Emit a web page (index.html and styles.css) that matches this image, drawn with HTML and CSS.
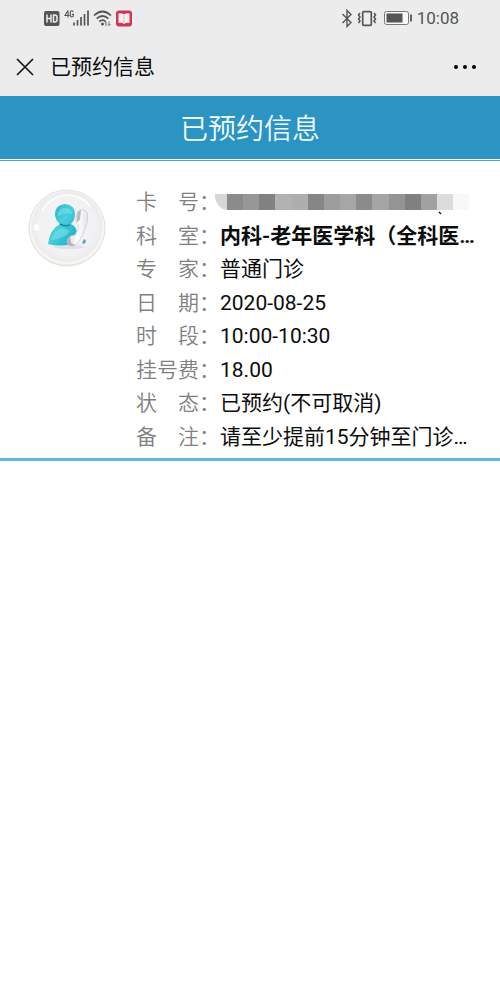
FILE: index.html
```html
<!DOCTYPE html>
<html lang="zh-CN">
<head>
<meta charset="utf-8">
<meta name="viewport" content="width=device-width, initial-scale=1">
<title>已预约信息</title>
<link rel="stylesheet" href="styles.css">
</head>
<body>
<div class="status">
  <svg class="status-icons" width="92" height="22" viewBox="43 7 92 22" aria-hidden="true">
    <rect x="44" y="11" width="15.500" height="15" rx="2" fill="#555"/>
    <path d="M47 14.500v8M51 14.500v8M47 18.500h4M53.500 15v7h1.200q2.300 0 2.300-2.300v-2.400q0-2.300-2.300-2.300z" fill="none" stroke="#eee" stroke-width="1.500"/>
    <path d="M68 10.500v7M68 10.500l-3 5h4.500M73.300 12q-.4-1.300-1.500-1.300-1.500 0-1.500 1.800v2.800q0 1.700 1.500 1.700 1.500 0 1.500-1.600v-1h-1.500" fill="none" stroke="#555" stroke-width="1.100"/>
    <path d="M74 22.500v3M77.500 20v5.500M81 17v8.500M84.500 14v11.500M88 10.500v15" stroke="#555" stroke-width="1.700"/>
    <path d="M94 15.500q8.500-8 17 0M96.700 18.700q5.800-5.400 11.600 0M99.300 21.700q3.200-3 6.400 0" fill="none" stroke="#555" stroke-width="1.700"/>
    <circle cx="102.500" cy="24" r="1.500" fill="#555"/>
    <path d="M106 22v4M105 23.500l1-1.500M109 21.500v4l1.500-1.500M109 25.500l-1-1" fill="none" stroke="#777"/>
    <rect x="116" y="10.500" width="16" height="16" rx="3" fill="#cf3656"/>
    <path d="M118.500 13.500q3-1 5.500 1 2.500-2 5.500-1v9.500q-3-.7-5.500 1-2.500-1.700-5.500-1z" fill="#fff0ef"/>
    <path d="M124 14.500v9.500" stroke="#e7a2ad" stroke-width=".8"/>
  </svg>
  <div class="status-right">
    <svg width="74" height="20" viewBox="340 8 74 20" aria-hidden="true">
      <path d="M342.500 14l8.500 8.500-4 4V10.500l4 4-8.500 8.500" fill="none" stroke="#555" stroke-width="1.400"/>
      <rect x="362.700" y="11.700" width="8.600" height="13.600" rx="1" fill="none" stroke="#555" stroke-width="1.700"/>
      <path d="M360 13l-1.500 2 1.500 2-1.500 2 1.500 2-1.500 2M374 13l1.500 2-1.500 2 1.500 2-1.500 2 1.500 2" fill="none" stroke="#555" stroke-width="1.500"/>
      <rect x="384.500" y="11.500" width="24" height="13" rx="2" fill="#f7f7f7" stroke="#777"/>
      <rect x="386.500" y="13.500" width="16" height="9" fill="#555"/>
      <path d="M411 14.500v7" stroke="#555" stroke-width="1.800"/>
    </svg>
    <time>10:08</time>
  </div>
</div>
<header class="nav">
  <button class="icon-button" type="button" aria-label="关闭">
    <svg width="18" height="18" viewBox="0 0 18 18"><path d="M1 1l16 16M17 1L1 17" stroke="#161616" stroke-width="1.700"/></svg>
  </button>
  <div class="nav-title">已预约信息</div>
  <button class="icon-button" type="button" aria-label="更多">
    <svg width="22" height="6" viewBox="0 0 22 6"><circle cx="2" cy="3" r="2"/><circle cx="11" cy="3" r="2"/><circle cx="20" cy="3" r="2"/></svg>
  </button>
</header>
<main>
  <h1 class="title">已预约信息</h1>
  <section class="record">
    <svg class="avatar" width="80" height="80" viewBox="0 0 80 80" aria-hidden="true">
      <defs>
        <radialGradient id="disc" cx=".5" cy=".48" r=".52">
          <stop offset=".7" stop-color="#f2f2f4"/><stop offset=".87" stop-color="#ececec"/><stop offset=".94" stop-color="#f8f8f5"/><stop offset="1" stop-color="#dcdcd2"/>
        </radialGradient>
        <linearGradient id="body" x1="0" y1="0" x2="1" y2="1">
          <stop offset="0" stop-color="#25a9be"/><stop offset=".45" stop-color="#48d0df"/><stop offset="1" stop-color="#1ba6be"/>
        </linearGradient>
        <linearGradient id="phone" x1="0" y1="0" x2="1" y2="0">
          <stop offset="0" stop-color="#d8d4da"/><stop offset=".5" stop-color="#fff"/><stop offset="1" stop-color="#e6e3e8"/>
        </linearGradient>
      </defs>
      <circle cx="40" cy="40" r="38" fill="url(#disc)" stroke="#e3e3d9"/>
      <path d="M15 23Q24 8 40 7q14 0 23 11" fill="none" stroke="#fff" stroke-width="2" opacity=".8"/>
      <circle cx="9.500" cy="39.500" r="3" fill="#fff"/>
      <ellipse cx="42" cy="59" rx="15" ry="2" fill="#dce3e6"/>
      <path d="M21 56q2-15 12-20-5-4-5-10 0-9 10-10 10 1 10 10 0 6-4 10 5 2 6 8l-6 12q-12 3-23 0z" fill="url(#body)"/>
      <path d="M31 25q3-6 9-5 5 2 5 6-8-2-14 2zM24 52q4-11 12-12l7 3q-5 8-19 9z" fill="#80e2e9" opacity=".55"/>
      <path d="M33 36q5 3 10 1" fill="none" stroke="#158fa4" stroke-width="1.500"/>
      <path d="M51 23q6-3 9 1 2 7-2 17-2 7-6 12-3 4-6 5-5 0-6-4 0-4 4-6l4-1q4-6 4-10-3-1-3-5 0-5 2-9z" fill="url(#phone)" stroke="#cfcbd1" stroke-width=".8"/>
      <path d="M51 24l3-2-1 9q-1 3-3 3-1-5 1-10zM40 54q0-3 3-5l1 6 4 2q-6 3-8-3z" fill="#a79fa9" opacity=".75"/>
      <path d="M55 55l2-4q4 2 0 5z" fill="#53adbd"/>
    </svg>
    <dl class="details">
      <div class="row"><dt>卡　号：</dt><dd class="masked">
        <svg width="256" height="24" viewBox="214 191 256 24" role="img" aria-label="已隐藏">
          <path d="M215 194h12v16q-9-1-12-12z" fill="#d6d6d6"/>
          <g shape-rendering="crispEdges">
          <path fill="#8b8b8b" d="M227 194h16v16h-16z"/><path fill="#979797" d="M243 194h16v16h-16z"/>
          <path fill="#828282" d="M259 194h16v16h-16z"/><path fill="#b2b2b2" d="M275 194h17v16h-17z"/>
          <path fill="#aeaeae" d="M292 194h16v16h-16z"/><path fill="#868686" d="M308 194h16v16h-16z"/>
          <path fill="#9d9d9d" d="M324 194h16v16h-16z"/><path fill="#a6a6a6" d="M340 194h16v16h-16z"/>
          <path fill="#8b8b8b" d="M356 194h16v16h-16z"/><path fill="#a5a5a5" d="M372 194h17v16h-17z"/>
          <path fill="#949494" d="M389 194h16v16h-16z"/><path fill="#808080" d="M405 194h16v16h-16z"/>
          <path fill="#a1a1a1" d="M421 194h16v16h-16z"/><path fill="#dcdcdc" d="M437 194h16v16h-16z"/>
          <path fill="#f8f8f8" d="M453 194h16v16h-16z"/>
          </g>
          <path d="M439 212l2 2" stroke="#111" stroke-width="1.500"/>
        </svg>
      </dd></div>
      <div class="row"><dt>科　室：</dt><dd class="strong">内科-老年医学科（全科医…</dd></div>
      <div class="row"><dt>专　家：</dt><dd>普通门诊</dd></div>
      <div class="row"><dt>日　期：</dt><dd>2020-08-25</dd></div>
      <div class="row"><dt>时　段：</dt><dd>10:00-10:30</dd></div>
      <div class="row"><dt>挂号费：</dt><dd>18.00</dd></div>
      <div class="row"><dt>状　态：</dt><dd>已预约(不可取消)</dd></div>
      <div class="row"><dt>备　注：</dt><dd>请至少提前15分钟至门诊…</dd></div>
    </dl>
  </section>
</main>
</body>
</html>
```
FILE: styles.css
```css
* {
  box-sizing: border-box;
}

body {
  margin: 0;
  background: #fff;
  color: #0c0c0c;
  font-family: Roboto, "Noto Sans CJK SC", sans-serif;
  font-size: 21px;
}

.status {
  display: flex;
  align-items: center;
  justify-content: space-between;
  height: 36px;
  padding: 0 41px 0 43px;
  background: #ececec;
}

.status-right {
  display: flex;
  align-items: center;
  gap: 3px;
  color: #555;
  font-size: 17px;
}

.nav {
  display: flex;
  align-items: center;
  height: 60px;
  padding: 2px 24px 0 16px;
  background: #ececec;
}

.nav-title {
  flex: 1;
  padding-left: 16px;
  line-height: 30px;
}

.icon-button {
  display: flex;
  padding: 0;
  border: 0;
  background: none;
}

.title {
  margin: 0;
  padding-top: 4px;
  border-bottom: 1px solid #5a9fc0;
  color: #f2fbff;
  font-size: 28px;
  font-weight: 350;
  line-height: 60px;
  text-align: center;
  background: linear-gradient(#2b94c3, #2b94c3) no-repeat 0 0 / 100% 63px;
}

.record {
  display: flex;
  align-items: flex-start;
  gap: 29px;
  padding: 25px 24px 4px 27px;
  border-bottom: 3px solid #5cb8dd;
}

.avatar {
  flex: none;
  margin-top: 2px;
}

.details {
  display: grid;
  flex: 1;
  min-width: 0;
  min-height: 268px;
  margin: 0;
}

.row {
  display: flex;
  line-height: 33px;
}

dt {
  flex: none;
  color: #808080;
  font-weight: 350;
}

dd {
  flex: 1;
  min-width: 0;
  margin: 0;
  white-space: nowrap;
}

.masked {
  display: flex;
  align-items: center;
  margin-left: -6px;
}

.strong {
  font-weight: 700;
}
```
